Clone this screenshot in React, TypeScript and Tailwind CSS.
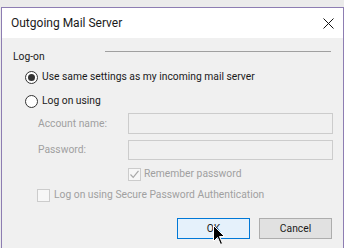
import React from "react";

function Radio({ checked }: { checked?: boolean }) {
  return (
    <span className="w-[13px] h-[13px] rounded-full border border-[#333333] bg-white flex items-center justify-center shrink-0">
      {checked && <span className="w-[7px] h-[7px] rounded-full bg-[#333333]" />}
    </span>
  );
}

function Check({ checked }: { checked?: boolean }) {
  return (
    <span className="w-[13px] h-[13px] border border-[#cccccc] bg-[#f7f7f7] flex items-center justify-center shrink-0">
      {checked && (
        <svg width="11" height="11" viewBox="0 0 11 11">
          <path d="M1.5 5.5 L4.2 8.3 L9.5 1.8" fill="none" stroke="#a8a8a8" strokeWidth="1.2" />
        </svg>
      )}
    </span>
  );
}

export default function App() {
  return (
    <div className="w-[344px] h-[248px] bg-[#ebebeb] pt-[7px] pl-[1px] overflow-hidden relative text-[10.3px] text-[#1a1a1a] font-['Roboto',sans-serif]">
      <div className="h-[241px] border-x border-t border-[#8d7db2] flex flex-col">
        {/* Title bar */}
        <div className="h-[30px] bg-white flex items-center justify-between pl-[9px] pr-[9px] shrink-0 text-[12px]">
          <span>Outgoing Mail Server</span>
          <svg width="11" height="11" viewBox="0 0 11 11">
            <path d="M0.5 0.5 L10.5 10.5 M10.5 0.5 L0.5 10.5" stroke="#111" strokeWidth="1" />
          </svg>
        </div>

        {/* Body */}
        <div className="flex-1 bg-[#f0f0f0] flex flex-col">
          <div className="mt-[12px] h-[14px] flex items-center pl-[11px] pr-[12px]">
            <span>Log-on</span>
            <div className="flex-1 ml-[60px] border-t border-[#a0a0a0] self-start mt-[1px]" />
          </div>

          <div className="mt-[6px] h-[14px] flex items-center gap-[4px] pl-[23px]">
            <Radio checked />
            <span>Use same settings as my incoming mail server</span>
          </div>

          <div className="mt-[10px] h-[14px] flex items-center gap-[4px] pl-[23px]">
            <Radio />
            <span>Log on using</span>
          </div>

          <div className="mt-[5px] h-[21px] flex items-center pl-[36px] text-[#a0a0a0]">
            <span className="w-[90px]">Account name:</span>
            <div className="w-[205px] h-full border border-[#cccccc] bg-[#f0f0f0]" />
          </div>

          <div className="mt-[6px] h-[20px] flex items-center pl-[36px] text-[#a0a0a0]">
            <span className="w-[90px]">Password:</span>
            <div className="w-[205px] h-full border border-[#cccccc] bg-[#f0f0f0]" />
          </div>

          <div className="mt-[7px] h-[14px] flex items-center gap-[3px] pl-[126px] text-[#a0a0a0]">
            <Check checked />
            <span>Remember password</span>
          </div>

          <div className="mt-[7px] h-[14px] flex items-center gap-[4px] pl-[35px] text-[#a0a0a0]">
            <Check />
            <span>Log on using Secure Password Authentication</span>
          </div>

          <div className="mt-[16px] h-[21px] flex justify-end gap-[9px] pr-[11px]">
            <button className="w-[73px] h-full border border-[#0078d7] bg-[#e5f1fb]">OK</button>
            <button className="w-[73px] h-full border border-[#adadad] bg-[#e1e1e1]">Cancel</button>
          </div>
        </div>
      </div>

      {/* Mouse cursor */}
      <svg className="absolute left-[213px] top-[225px]" width="13" height="21" viewBox="0 0 13 21">
        <path d="M0.5 0.5 L0.5 16.5 L4.5 12.5 L7.5 19.5 L9.5 18.5 L6.5 11.5 L11.5 11.5 Z" fill="#000" stroke="#fff" strokeWidth="1" />
      </svg>
    </div>
  );
}
